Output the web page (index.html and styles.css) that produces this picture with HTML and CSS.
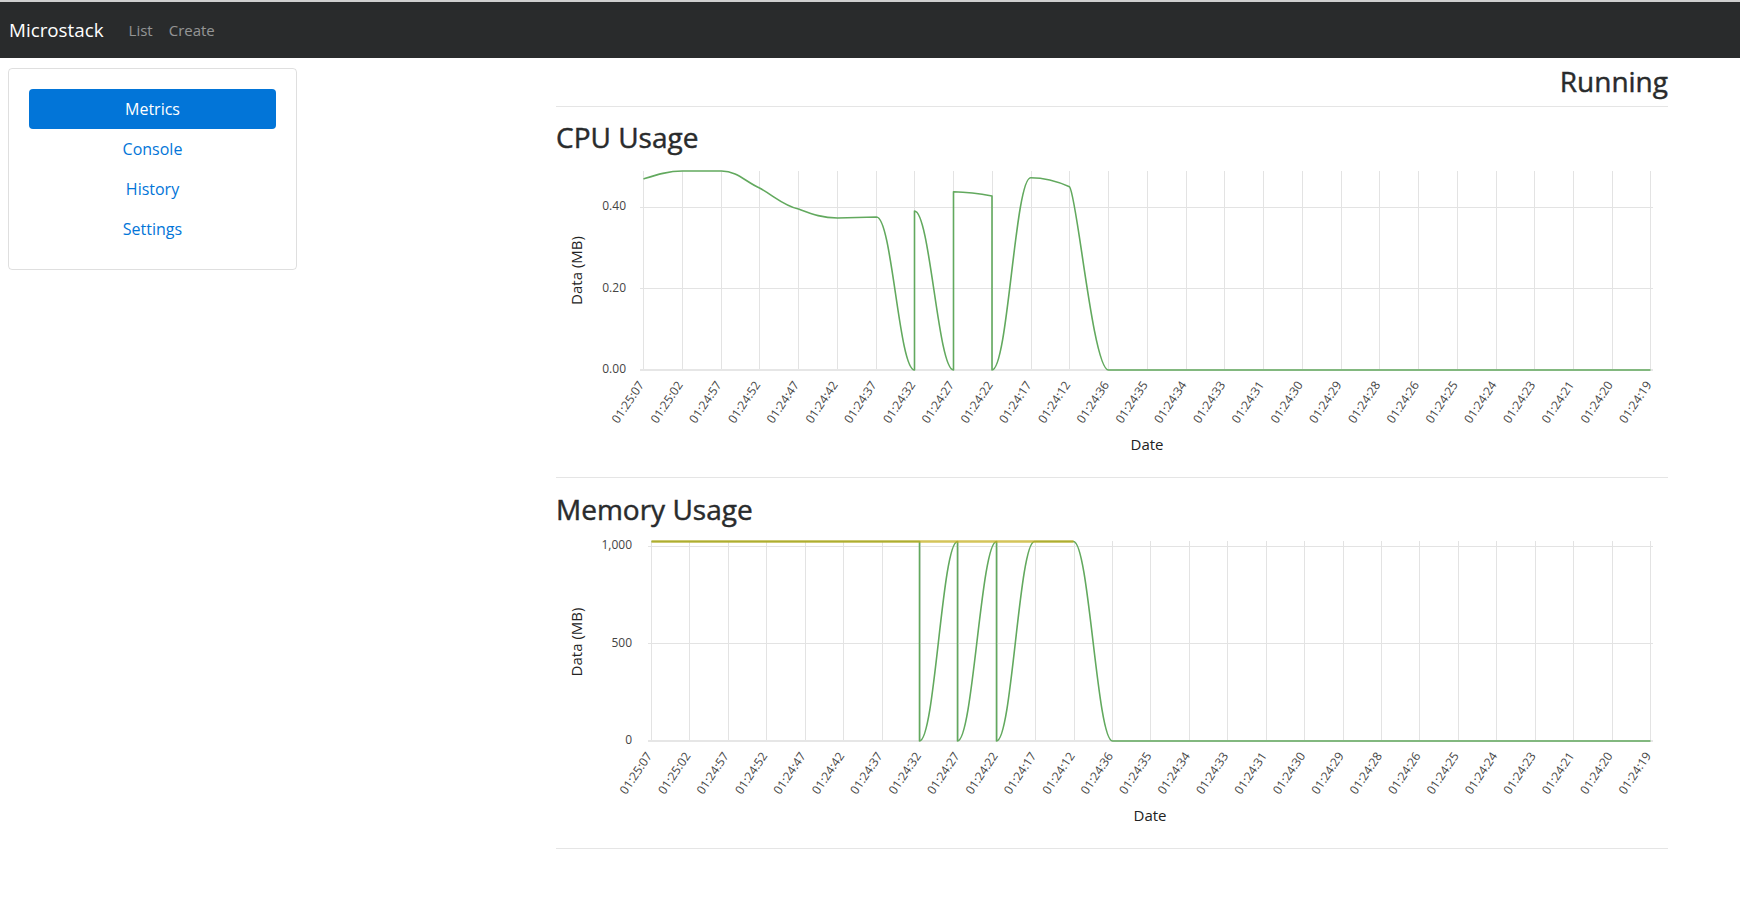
FILE: index.html
```html
<!DOCTYPE html>
<html lang="en">
<head>
<meta charset="utf-8">
<title>Microstack</title>
<link rel="stylesheet" href="styles.css">
</head>
<body>
<header class="topbar">
  <a class="brand" href="#">Microstack</a>
  <nav class="topnav">
    <a href="#">List</a>
    <a href="#">Create</a>
  </nav>
</header>

<div class="layout">
  <aside class="sidebar">
    <a class="pill active" href="#">Metrics</a>
    <a class="pill" href="#">Console</a>
    <a class="pill" href="#">History</a>
    <a class="pill" href="#">Settings</a>
  </aside>

  <main class="main">
    <h2 class="status">Running</h2>
    <hr class="rule rule-top">

    <h3 class="section-title">CPU Usage</h3>
    <svg class="chart" width="1112" height="313" viewBox="0 0 1112 313">
      <path class="grid" d="M87.5,17V216M126.5,17V216M165.5,17V216M203.5,17V216M242.5,17V216M281.5,17V216M320.5,17V216M358.5,17V216M397.5,17V216M436.5,17V216M475.5,17V216M513.5,17V216M552.5,17V216M591.5,17V216M630.5,17V216M668.5,17V216M707.5,17V216M746.5,17V216M785.5,17V216M823.5,17V216M862.5,17V216M901.5,17V216M940.5,17V216M978.5,17V216M1017.5,17V216M1056.5,17V216M1094.5,17V216M84,53.5H1097M84,134.5H1097"/>
      <path class="zero" d="M84,216H1097"/>
      <text class="ytick" x="70" y="53">0.40</text>
      <text class="ytick" x="70" y="134.5">0.20</text>
      <text class="ytick" x="70" y="216">0.00</text>
      <text class="axis-title" transform="translate(22,116.5) rotate(-90)">Data (MB)</text>
      <path class="series" d="M87.5,25 C100,21 112,17 126.5,17 L165.5,17 C181,17 190,28 203.5,34 C218,42 228,52 242.5,55 C256,60 266,64 281.5,64 L320.5,63 C336,63 343,216 358.5,216 L358.5,57 C374,57 382,216 397.5,216 L397.5,37.7 C410,38 423,39.5 436,42 L436,216 C452,216 459,23.7 474.7,23.7 C488,23.7 503,28 513.5,32.7 C521,40 537,216 552.5,216 L1094.5,216"/>
      <g class="xticks">
        <text transform="translate(86,229) rotate(-56)">01:25:07</text>
        <text transform="translate(124.8,229) rotate(-56)">01:25:02</text>
        <text transform="translate(163.5,229) rotate(-56)">01:24:57</text>
        <text transform="translate(202.3,229) rotate(-56)">01:24:52</text>
        <text transform="translate(241,229) rotate(-56)">01:24:47</text>
        <text transform="translate(279.8,229) rotate(-56)">01:24:42</text>
        <text transform="translate(318.5,229) rotate(-56)">01:24:37</text>
        <text transform="translate(357.3,229) rotate(-56)">01:24:32</text>
        <text transform="translate(396,229) rotate(-56)">01:24:27</text>
        <text transform="translate(434.8,229) rotate(-56)">01:24:22</text>
        <text transform="translate(473.5,229) rotate(-56)">01:24:17</text>
        <text transform="translate(512.3,229) rotate(-56)">01:24:12</text>
        <text transform="translate(551,229) rotate(-56)">01:24:36</text>
        <text transform="translate(589.8,229) rotate(-56)">01:24:35</text>
        <text transform="translate(628.5,229) rotate(-56)">01:24:34</text>
        <text transform="translate(667.3,229) rotate(-56)">01:24:33</text>
        <text transform="translate(706,229) rotate(-56)">01:24:31</text>
        <text transform="translate(744.8,229) rotate(-56)">01:24:30</text>
        <text transform="translate(783.5,229) rotate(-56)">01:24:29</text>
        <text transform="translate(822.3,229) rotate(-56)">01:24:28</text>
        <text transform="translate(861,229) rotate(-56)">01:24:26</text>
        <text transform="translate(899.8,229) rotate(-56)">01:24:25</text>
        <text transform="translate(938.5,229) rotate(-56)">01:24:24</text>
        <text transform="translate(977.3,229) rotate(-56)">01:24:23</text>
        <text transform="translate(1016,229) rotate(-56)">01:24:21</text>
        <text transform="translate(1054.8,229) rotate(-56)">01:24:20</text>
        <text transform="translate(1093.5,229) rotate(-56)">01:24:19</text>
      </g>
      <text class="axis-title" x="591" y="291.6">Date</text>
    </svg>
    <hr class="rule">

    <h3 class="section-title">Memory Usage</h3>
    <svg class="chart" width="1112" height="312" viewBox="0 0 1112 312">
      <path class="grid" d="M95.5,15V215M133.5,15V215M172.5,15V215M210.5,15V215M249.5,15V215M287.5,15V215M326.5,15V215M364.5,15V215M402.5,15V215M441.5,15V215M479.5,15V215M518.5,15V215M556.5,15V215M594.5,15V215M633.5,15V215M671.5,15V215M710.5,15V215M748.5,15V215M787.5,15V215M825.5,15V215M863.5,15V215M902.5,15V215M940.5,15V215M979.5,15V215M1017.5,15V215M1056.5,15V215M1094.5,15V215M92,20.5H1097M92,117.5H1097"/>
      <path class="zero" d="M92,215H1097"/>
      <text class="ytick" x="76" y="20">1,000</text>
      <text class="ytick" x="76" y="117.5">500</text>
      <text class="ytick" x="76" y="215">0</text>
      <text class="axis-title" transform="translate(22,116) rotate(-90)">Data (MB)</text>
      <path class="series" d="M95.5,15.5 L363.5,15.5 L363.5,215 C379,215 386,15.5 401.5,15.5 L401.5,215 C417,215 425,15.5 440.5,15.5 L440.5,215 C456,215 463,15.5 478.5,15.5 L517.5,15.5 C533,15.5 541,215 556.5,215 L1094.5,215"/>
      <path class="limit" d="M95.5,15.5 L517.5,15.5"/>
      <g class="xticks">
        <text transform="translate(94,228) rotate(-56)">01:25:07</text>
        <text transform="translate(132.4,228) rotate(-56)">01:25:02</text>
        <text transform="translate(170.8,228) rotate(-56)">01:24:57</text>
        <text transform="translate(209.3,228) rotate(-56)">01:24:52</text>
        <text transform="translate(247.7,228) rotate(-56)">01:24:47</text>
        <text transform="translate(286.1,228) rotate(-56)">01:24:42</text>
        <text transform="translate(324.5,228) rotate(-56)">01:24:37</text>
        <text transform="translate(362.9,228) rotate(-56)">01:24:32</text>
        <text transform="translate(401.4,228) rotate(-56)">01:24:27</text>
        <text transform="translate(439.8,228) rotate(-56)">01:24:22</text>
        <text transform="translate(478.2,228) rotate(-56)">01:24:17</text>
        <text transform="translate(516.6,228) rotate(-56)">01:24:12</text>
        <text transform="translate(555,228) rotate(-56)">01:24:36</text>
        <text transform="translate(593.5,228) rotate(-56)">01:24:35</text>
        <text transform="translate(631.9,228) rotate(-56)">01:24:34</text>
        <text transform="translate(670.3,228) rotate(-56)">01:24:33</text>
        <text transform="translate(708.7,228) rotate(-56)">01:24:31</text>
        <text transform="translate(747.1,228) rotate(-56)">01:24:30</text>
        <text transform="translate(785.6,228) rotate(-56)">01:24:29</text>
        <text transform="translate(824,228) rotate(-56)">01:24:28</text>
        <text transform="translate(862.4,228) rotate(-56)">01:24:26</text>
        <text transform="translate(900.8,228) rotate(-56)">01:24:25</text>
        <text transform="translate(939.2,228) rotate(-56)">01:24:24</text>
        <text transform="translate(977.7,228) rotate(-56)">01:24:23</text>
        <text transform="translate(1016.1,228) rotate(-56)">01:24:21</text>
        <text transform="translate(1054.5,228) rotate(-56)">01:24:20</text>
        <text transform="translate(1092.9,228) rotate(-56)">01:24:19</text>
      </g>
      <text class="axis-title" x="594" y="291">Date</text>
    </svg>
    <hr class="rule">
  </main>
</div>
</body>
</html>
```

FILE: styles.css
```css
html, body {
  margin: 0;
  padding: 0;
  background: #ffffff;
}

body {
  font-family: "Open Sans", "Noto Sans", "Liberation Sans", sans-serif;
  font-size: 16px;
  line-height: 1.5;
  color: #292b2c;
}

a {
  text-decoration: none;
}

/* ---------- top navbar ---------- */
.topbar {
  display: flex;
  align-items: center;
  height: 56px;
  border-top: 2px solid #cfcfcf;
  background: #292b2c;
  padding-left: 9px;
}

.brand {
  font-size: 18.8px;
  line-height: 30px;
  color: #ffffff;
  margin-right: 17px;
}

.topnav {
  display: flex;
}

.topnav a {
  font-size: 15px;
  line-height: 24px;
  padding: 0 8px;
  color: rgba(255, 255, 255, 0.5);
}

/* ---------- layout ---------- */
.layout {
  display: flex;
  align-items: flex-start;
  padding: 6px 8px 0 8px;
}

.sidebar {
  box-sizing: border-box;
  width: 289px;
  flex: 0 0 289px;
  margin-top: 4px;
  padding: 20px;
  border: 1px solid rgba(0, 0, 0, 0.125);
  border-radius: 4px;
}

.pill {
  display: block;
  height: 40px;
  line-height: 40px;
  text-align: center;
  font-size: 16px;
  color: #0275d8;
  border-radius: 4px;
}

.pill.active {
  background: #0275d8;
  color: #ffffff;
}

.main {
  width: 1112px;
  flex: 0 0 1112px;
  margin-left: 259px;
}

.status,
.section-title {
  margin: 0;
  font-size: 28px;
  line-height: 34px;
  font-weight: 400;
  -webkit-text-stroke: 0.45px #292b2c;
}

.status {
  text-align: right;
}

.rule {
  height: 0;
  border: 0;
  border-top: 1px solid rgba(0, 0, 0, 0.1);
  margin: 10px 0 14px 0;
}

.rule-top {
  margin: 8px 0 13px 0;
}

/* ---------- charts ---------- */
.chart {
  display: block;
  overflow: visible;
}

.grid {
  fill: none;
  stroke: #e3e3e3;
  stroke-width: 1;
  shape-rendering: crispEdges;
}

.zero {
  fill: none;
  stroke: #e6e6e6;
  stroke-width: 2;
}

.series {
  fill: none;
  stroke: #62a95e;
  stroke-width: 1.6;
  stroke-linejoin: round;
}

.limit {
  fill: none;
  stroke: rgba(198, 176, 35, 0.75);
  stroke-width: 2.5;
}

.ytick {
  font-size: 12px;
  fill: #444444;
  text-anchor: end;
  dominant-baseline: middle;
}

.xticks text {
  font-size: 12px;
  fill: #444444;
  text-anchor: end;
  dominant-baseline: middle;
}

.axis-title {
  font-size: 15px;
  fill: #222222;
  text-anchor: middle;
  dominant-baseline: middle;
}
```
